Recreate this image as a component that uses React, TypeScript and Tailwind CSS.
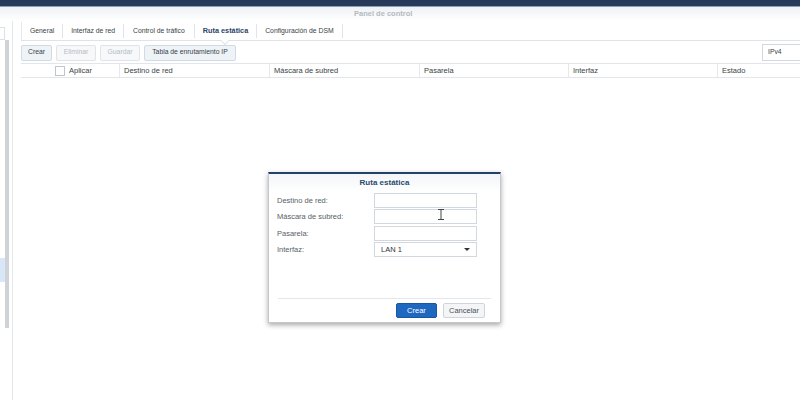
const TABS = ['General', 'Interfaz de red', 'Control de tráfico', 'Ruta estática', 'Configuración de DSM'];

const COLUMNS = [
  { label: 'Destino de red', w: 'w-[150px]' },
  { label: 'Máscara de subred', w: 'w-[150px]' },
  { label: 'Pasarela', w: 'w-[149px]' },
  { label: 'Interfaz', w: 'w-[149px]' },
  { label: 'Estado', w: 'flex-1' },
];

function Field({ label, children }: { label: string; children?: React.ReactNode }) {
  return (
    <div className="flex items-center h-[16.5px]">
      <div className="w-[97px] text-[#575e66]">{label}</div>
      <div className="w-[103px] h-[15px] border border-[#d3d8de] bg-white flex items-center px-[6px] text-[#333]">
        {children}
      </div>
    </div>
  );
}

export default function App() {
  return (
    <div
      className="relative w-[800px] h-[400px] overflow-hidden bg-white text-[7.5px] text-[#3a3f45]"
      style={{ fontFamily: '"Liberation Sans", Arial, sans-serif' }}
    >
      {/* top bar */}
      <div className="h-[7px] bg-[#26395a] border-b border-[#8ea0b8]" />
      {/* window title */}
      <div className="h-[14px] bg-gradient-to-b from-[#eef1f4] to-white flex items-center pl-[354px] font-bold text-[#b3bac2]">
        Panel de control
      </div>

      <div className="flex h-[379px]">
        {/* left sidebar */}
        <div className="w-[13px] border-r border-[#e3e6ea] flex flex-col pt-[6px]">
          <div className="h-[13px] w-[5px] border border-[#dde1e6] border-l-0" />
          <div className="flex flex-1">
            <div className="w-[5px] flex flex-col">
              <div className="h-[218px]" />
              <div className="h-[24px] bg-[#d8e6f8]" />
            </div>
            <div className="w-[4px] h-[288px] bg-[#cfd2d6]" />
          </div>
        </div>

        {/* main */}
        <div className="flex-1 pl-[8px] pt-[1px]">
          {/* tabs */}
          <div className="relative flex h-[19px] border-b border-[#dfe3e8] items-center text-[6.8px]">
            <div className="border-l border-[#e4e7eb] h-full" />
            {TABS.map((t, i) => (
              <div
                key={t}
                className={`h-[14px] flex items-center border-r border-[#e1e4e8] ${
                  i === 3 ? 'px-[8px] font-bold text-[7.3px] text-[#2a4467]' : i === 2 ? 'px-[9px]' : 'px-[8px]'
                }`}
              >
                {t}
              </div>
            ))}
            <div className="absolute left-[201px] -bottom-[4px] w-[6px] h-[6px] bg-white border-r border-b border-[#dfe3e8] rotate-45" />
          </div>

          {/* toolbar */}
          <div className="flex items-center h-[21px] pt-[2px] gap-[4px] text-[6.8px]">
            <div className="h-[16px] w-[31px] justify-center flex items-center border border-[#d2dae3] bg-[#eef3f8] rounded-[2px]">Crear</div>
            <div className="h-[16px] w-[40px] justify-center flex items-center border border-[#dfe4e9] bg-[#f6f8fa] text-[#b5bcc4] rounded-[2px]">Eliminar</div>
            <div className="h-[16px] w-[40px] justify-center flex items-center border border-[#dfe4e9] bg-[#f6f8fa] text-[#b5bcc4] rounded-[2px]">Guardar</div>
            <div className="h-[16px] w-[92px] justify-center flex items-center border border-[#d2dae3] bg-[#eef3f8] rounded-[2px]">Tabla de enrutamiento IP</div>
            <div className="flex-1" />
            <div className="h-[17px] w-[38px] px-[5px] flex items-center border border-[#d3d8de] border-r-0 bg-white">IPv4</div>
          </div>

          {/* table header */}
          <div className="flex h-[15px] mt-[1px] border-y border-[#e2e5e9] items-center">
            <div className="w-[99px] h-full flex items-center pl-[34px] gap-[4px] border-r border-[#e5e8ec]">
              <div className="w-[10px] h-[10px] border border-[#bfc5cc] bg-white" />
              <span>Aplicar</span>
            </div>
            {COLUMNS.map((c) => (
              <div key={c.label} className={`${c.w} h-full flex items-center pl-[4px] border-r border-[#e5e8ec] last:border-r-0`}>
                {c.label}
              </div>
            ))}
          </div>
        </div>
      </div>

      {/* modal dialog */}
      <div className="absolute left-[268px] top-[172px] w-[233px] h-[151px] bg-white border border-[#c4c9cf] border-t-2 border-t-[#24416a] shadow-[0_2px_5px_rgba(0,0,0,0.35)] flex flex-col">
        <div className="h-[18px] flex items-center justify-center font-bold text-[8px] text-[#2b4a70] bg-gradient-to-b from-[#f3f5f8] to-white">
          Ruta estática
        </div>
        <div className="flex flex-col pl-[8px]">
          <Field label="Destino de red:" />
          <Field label="Máscara de subred:" />
          <Field label="Pasarela:" />
          <Field label="Interfaz:">
            <span className="flex-1">LAN 1</span>
            <div className="w-0 h-0 border-l-[3px] border-r-[3px] border-t-[3px] border-l-transparent border-r-transparent border-t-[#333]" />
          </Field>
        </div>
        <div className="flex-1" />
        <div className="mx-[9px] border-t border-[#e3e6ea]" />
        <div className="flex justify-end gap-[6px] pr-[15px] pt-[4px] pb-[4px]">
          <div className="w-[41px] h-[15px] flex items-center justify-center bg-[#1f68c0] border border-[#1a55a0] text-white rounded-[2px]">Crear</div>
          <div className="w-[42px] h-[15px] flex items-center justify-center bg-[#f3f5f7] border border-[#d0d5db] text-[#4a5057] rounded-[2px]">Cancelar</div>
        </div>
      </div>

      {/* I-beam cursor */}
      <svg className="absolute left-[437px] top-[209px]" width="8" height="11" viewBox="0 0 8 11">
        <path d="M1 0.5h6M1 10.5h6M4 0.5v10" stroke="#444" strokeWidth="1" fill="none" />
      </svg>
    </div>
  );
}
